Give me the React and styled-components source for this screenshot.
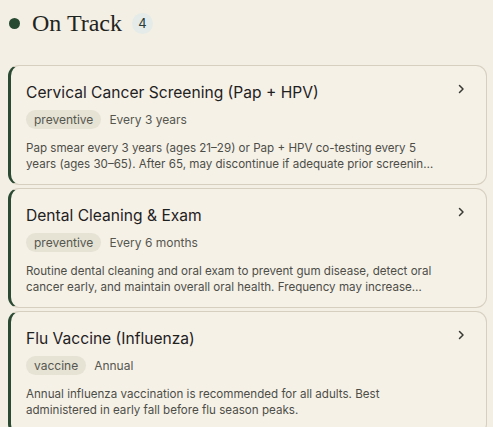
import React from "react";
import styled, { createGlobalStyle } from "styled-components";

const GlobalStyle = createGlobalStyle`
  body {
    margin: 0;
    background: #f3efe4;
    font-family: "Inter", "Noto Sans", sans-serif;
  }
`;

const Page = styled.div`
  padding: 0 6px 0 8px;
  display: flex;
  flex-direction: column;
`;

const Header = styled.div`
  display: flex;
  align-items: center;
  gap: 12px;
  height: 46px;
  padding-left: 1px;
  margin-bottom: 19px;
`;

const Dot = styled.span`
  width: 11px;
  height: 11px;
  border-radius: 50%;
  background: #284a33;
`;

const Heading = styled.h2`
  margin: 0 -2px 0 0;
  font-family: "Liberation Serif", "DejaVu Serif", serif;
  font-weight: 400;
  font-size: 24px;
  color: #1f2420;
`;

const Count = styled.span`
  display: inline-flex;
  align-items: center;
  justify-content: center;
  width: 21px;
  height: 21px;
  border-radius: 50%;
  background: #e4ebe8;
  color: #2b3a35;
  font-size: 13px;
`;

const List = styled.div`
  display: flex;
  flex-direction: column;
  gap: 3px;
`;

const Card = styled.div`
  position: relative;
  background: #f5f1e7;
  border: 1px solid #d6cfbf;
  border-left: 3px solid #2b4a33;
  border-radius: 11px;
  padding: 16px 40px 16px 15px;
  height: ${({ $h }) => $h}px;
  box-sizing: border-box;
`;

const Title = styled.div`
  font-size: 15.6px;
  font-weight: 400;
  color: #1f211e;
  line-height: 22px;
`;

const Meta = styled.div`
  display: flex;
  align-items: center;
  gap: 8px;
  margin-top: 6px;
`;

const Tag = styled.span`
  background: #e6e2d4;
  border-radius: 10px;
  padding: 1px 8px;
  font-size: 12px;
  line-height: 17px;
  color: #55574f;
`;

const Freq = styled.span`
  font-size: 12px;
  color: #55574f;
`;

const Desc = styled.p`
  margin: 11px 0 0;
  font-size: 11.6px;
  line-height: 16px;
  color: #4d4e47;
  max-width: 425px;
`;

const Chevron = styled.svg`
  position: absolute;
  top: 17px;
  right: 19px;
`;

const items = [
  {
    title: "Cervical Cancer Screening (Pap + HPV)",
    tag: "preventive",
    freq: "Every 3 years",
    desc: "Pap smear every 3 years (ages 21–29) or Pap + HPV co-testing every 5 years (ages 30–65). After 65, may discontinue if adequate prior screenin…",
    h: 120,
  },
  {
    title: "Dental Cleaning & Exam",
    tag: "preventive",
    freq: "Every 6 months",
    desc: "Routine dental cleaning and oral exam to prevent gum disease, detect oral cancer early, and maintain overall oral health. Frequency may increase…",
    h: 120,
  },
  {
    title: "Flu Vaccine (Influenza)",
    tag: "vaccine",
    freq: "Annual",
    desc: "Annual influenza vaccination is recommended for all adults. Best administered in early fall before flu season peaks.",
    h: 124,
  },
];

export default function App() {
  return (
    <>
      <GlobalStyle />
      <Page>
        <Header>
          <Dot />
          <Heading>On Track</Heading>
          <Count>4</Count>
        </Header>
        <List>
          {items.map((it) => (
            <Card key={it.title} $h={it.h}>
              <Title>{it.title}</Title>
              <Meta>
                <Tag>{it.tag}</Tag>
                <Freq>{it.freq}</Freq>
              </Meta>
              <Desc>{it.desc}</Desc>
              <Chevron width="12" height="12" viewBox="0 0 12 12" fill="none">
                <path d="M4.5 2.5 L8 6 L4.5 9.5" stroke="#3a3a35" strokeWidth="1.5" strokeLinecap="round" strokeLinejoin="round" />
              </Chevron>
            </Card>
          ))}
        </List>
      </Page>
    </>
  );
}
